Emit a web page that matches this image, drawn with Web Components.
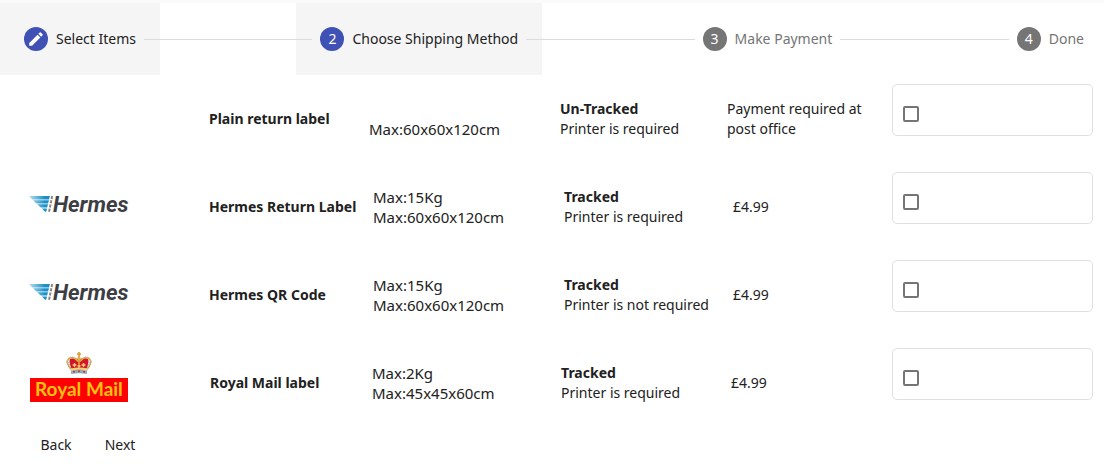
<!DOCTYPE html>
<html lang="en">
<head>
<meta charset="utf-8">
<title>Return shipping</title>
<style>
  body {
    margin: 0;
    background: #fff;
    color: #212121;
    font: 14px/20px "Noto Sans", "Open Sans", sans-serif;
  }
</style>
</head>
<body>
<return-page>
  <step-list slot="steps">
    <step-item state="edit">Select Items</step-item>
    <step-item state="current" number="2">Choose Shipping Method</step-item>
    <step-item number="3">Make Payment</step-item>
    <step-item number="4">Done</step-item>
  </step-list>

  <shipping-option name="Plain return label" columns="181 160 191 167">
    <span slot="size"><br>Max:60x60x120cm</span>
    <b slot="tracking">Un-Tracked</b>
    <span slot="printer">Printer is required</span>
    <span slot="price">Payment required at<br>post office</span>
  </shipping-option>

  <shipping-option name="Hermes Return Label" columns="181 164 191 169">
    <hermes-logo slot="logo"></hermes-logo>
    <span slot="size">Max:15Kg<br>Max:60x60x120cm</span>
    <b slot="tracking">Tracked</b>
    <span slot="printer">Printer is required</span>
    <span slot="price">£4.99</span>
  </shipping-option>

  <shipping-option name="Hermes QR Code" columns="181 164 191 169">
    <hermes-logo slot="logo"></hermes-logo>
    <span slot="size">Max:15Kg<br>Max:60x60x120cm</span>
    <b slot="tracking">Tracked</b>
    <span slot="printer">Printer is not required</span>
    <span slot="price">£4.99</span>
  </shipping-option>

  <shipping-option name="Royal Mail label" columns="182 162 189 170">
    <royal-mail-logo slot="logo"></royal-mail-logo>
    <span slot="size">Max:2Kg<br>Max:45x45x60cm</span>
    <b slot="tracking">Tracked</b>
    <span slot="printer">Printer is required</span>
    <span slot="price">£4.99</span>
  </shipping-option>

  <flat-button slot="actions">Back</flat-button>
  <flat-button slot="actions">Next</flat-button>
</return-page>

<script>
const define = (name, render) => customElements.define(name, class extends HTMLElement {
  connectedCallback() {
    if (this.shadowRoot) return;
    this.attachShadow({ mode: 'open' }).innerHTML = render(this);
  }
});

define('return-page', () => `
  <style>
    :host { display: block; border-top: 3px solid #fafafa; }
    footer { display: flex; padding: 0 24px; }
  </style>
  <slot name="steps"></slot>
  <main><slot></slot></main>
  <footer><slot name="actions"></slot></footer>
`);

define('step-list', () => `
  <style>
    :host { display: flex; align-items: center; }
  </style>
  <slot></slot>
`);

/* A step grows to carry the connector that leads to the next one. */
define('step-item', el => {
  const state = el.getAttribute('state');
  const badge = state === 'edit'
    ? `<svg width="18" height="18" viewBox="0 0 24 24" role="img" aria-label="Completed"><path fill="#fff" d="M3 17.25V21h3.750L17.810 9.940l-3.750-3.750L3 17.250zM20.710 7.040a1 1 0 0 0 0-1.410l-2.340-2.340a1 1 0 0 0-1.410 0l-1.830 1.830 3.750 3.750 1.830-1.830z"/></svg>`
    : el.getAttribute('number');
  return `
  <style>
    :host { display: flex; align-items: center; flex: 1 0 auto; }
    :host(:last-of-type) { flex: 0 0 auto; }
    .step { display: flex; align-items: center; gap: 8px; height: 72px; padding: 0 24px; }
    :host([state]) .step { background: #f5f5f5; }
    :host(:last-of-type) .step { padding-right: 20px; }
    .badge { display: flex; align-items: center; justify-content: center; width: 24px; height: 24px; border-radius: 50%; background: #757575; color: #fff; }
    :host([state]) .badge { background: #3f51b5; }
    .label { color: #757575; white-space: nowrap; }
    :host([state]) .label { color: #212121; }
    .line { flex: 1; height: 1px; margin: 0 -16px; background: #dcdcdc; z-index: 1; }
    :host(:last-of-type) .line { display: none; }
  </style>
  <div class="step"><span class="badge">${badge}</span><span class="label"><slot></slot></span></div>
  <div class="line"></div>`;
});

define('shipping-option', el => {
  const name = el.getAttribute('name');
  const columns = el.getAttribute('columns').split(' ').map(w => `<col style="width:${w}px">`).join('');
  return `
  <style>
    :host { display: flex; align-items: flex-start; padding: 0 11px 0 28px; }
    table { flex: 1; width: 0; height: 88px; table-layout: fixed; border-collapse: collapse; }
    th, td { padding: 0; text-align: left; vertical-align: middle; white-space: nowrap; }
    .size { font-size: 15px; }
    ::slotted(*) { display: block; }
    label { display: block; box-sizing: border-box; width: 201px; height: 52px; margin-top: 9px; padding: 21px 10px 0; border: 1px solid #e0e0e0; border-radius: 5px; }
    input { appearance: none; display: block; box-sizing: border-box; width: 16px; height: 16px; margin: 0; border: 2px solid #757575; border-radius: 2px; background: #fff; }
    input:checked { border-color: #3f51b5; background: #3f51b5; }
  </style>
  <table>
    <colgroup>${columns}<col></colgroup>
    <tr>
      <td><slot name="logo"></slot></td>
      <th scope="row">${name}</th>
      <td class="size"><slot name="size"></slot></td>
      <td><slot name="tracking"></slot><slot name="printer"></slot></td>
      <td><slot name="price"></slot></td>
    </tr>
  </table>
  <label><input type="checkbox" aria-label="${name}"></label>`;
});

define('flat-button', () => `
  <style>
    :host { display: block; }
    button { display: block; min-width: 64px; height: 36px; padding: 0 16px; border: 0; border-radius: 4px; background: transparent; color: inherit; font: inherit; cursor: pointer; }
  </style>
  <button type="button"><slot></slot></button>
`);

define('hermes-logo', () => `
  <style>
    :host { display: block; }
    svg { display: block; overflow: visible; }
    text { font: italic bold 22px Roboto, sans-serif; }
  </style>
  <svg width="112" height="42" viewBox="0 -8 112 42" role="img" aria-label="Hermes">
    <defs><linearGradient id="wing" gradientUnits="userSpaceOnUse" x1="1" y1="0" x2="22" y2="0"><stop offset="0" stop-color="#b5e0f0"/><stop offset=".75" stop-color="#1c90c6"/></linearGradient></defs>
    <g fill="url(#wing)">
      <path d="M1 2H22L21 5.400H4.300Z"/>
      <path d="M5 6.200H21L20.100 9.500H8.400Z"/>
      <path d="M9.200 10.300H20L19.100 13.600H12.800Z"/>
      <path d="M13.800 14.400H19L18.200 17.800H17Z"/>
    </g>
    <path d="M24.200 2 21 18" stroke="#85878b" stroke-width="2" stroke-dasharray="3.100 1.200" fill="none"/>
    <text x="25" y="18" fill="#3d3e43">Hermes</text>
  </svg>
`);

define('royal-mail-logo', () => `
  <style>
    :host { display: block; }
    svg { display: block; }
    text { font: bold 19px Lato, sans-serif; }
  </style>
  <svg width="102" height="62" viewBox="0 0 102 62" role="img" aria-label="Royal Mail">
    <path d="M2 26H100V50H2Z" fill="#f00"/>
    <text x="7" y="44" fill="#ffc20e">Royal Mail</text>
    <path d="M42 12Q40 6 45 6Q50 6 51 9Q52 6 57 6Q62 6 60 12L59 18H43Z" fill="#d4142a"/>
    <path d="M43.500 18Q37 10 40.500 7Q45 3.500 50 9.500M58.500 18Q65 10 61.500 7Q57 3.500 52 9.500M51 6V18" fill="none" stroke="#dba53a" stroke-width="1.600"/>
    <path d="M39.200 8 43 17M62.800 8 59 17M42 5.500 46 5M60 5.500 56 5" stroke="#a8bccb" stroke-width="1.400" stroke-dasharray="1.200 1"/>
    <path d="M51 0V6M49 2.200H53" stroke="#dba53a" stroke-width="1.800"/>
    <circle cx="51" cy="6.500" r="1.800" fill="#e0b04c"/>
    <path d="M44.500 13H48.500M46.500 11V15M53.500 13H57.500M55.500 11V15M49.500 14H52.500" stroke="#f1cf74" stroke-width="1.400"/>
    <path d="M42.500 16.500Q51 14.500 59.500 16.500V18.500Q51 17 42.500 18.500Z" fill="#f3d17a"/>
    <path d="M43 18.500Q51 17 59 18.500V22Q51 20.500 43 22Z" fill="#93a9b5"/>
    <path d="M45 19.800H47M50 19.300H52M55 19.800H57" stroke="#c33" stroke-width="1.400"/>
  </svg>
`);
</script>
</body>
</html>
